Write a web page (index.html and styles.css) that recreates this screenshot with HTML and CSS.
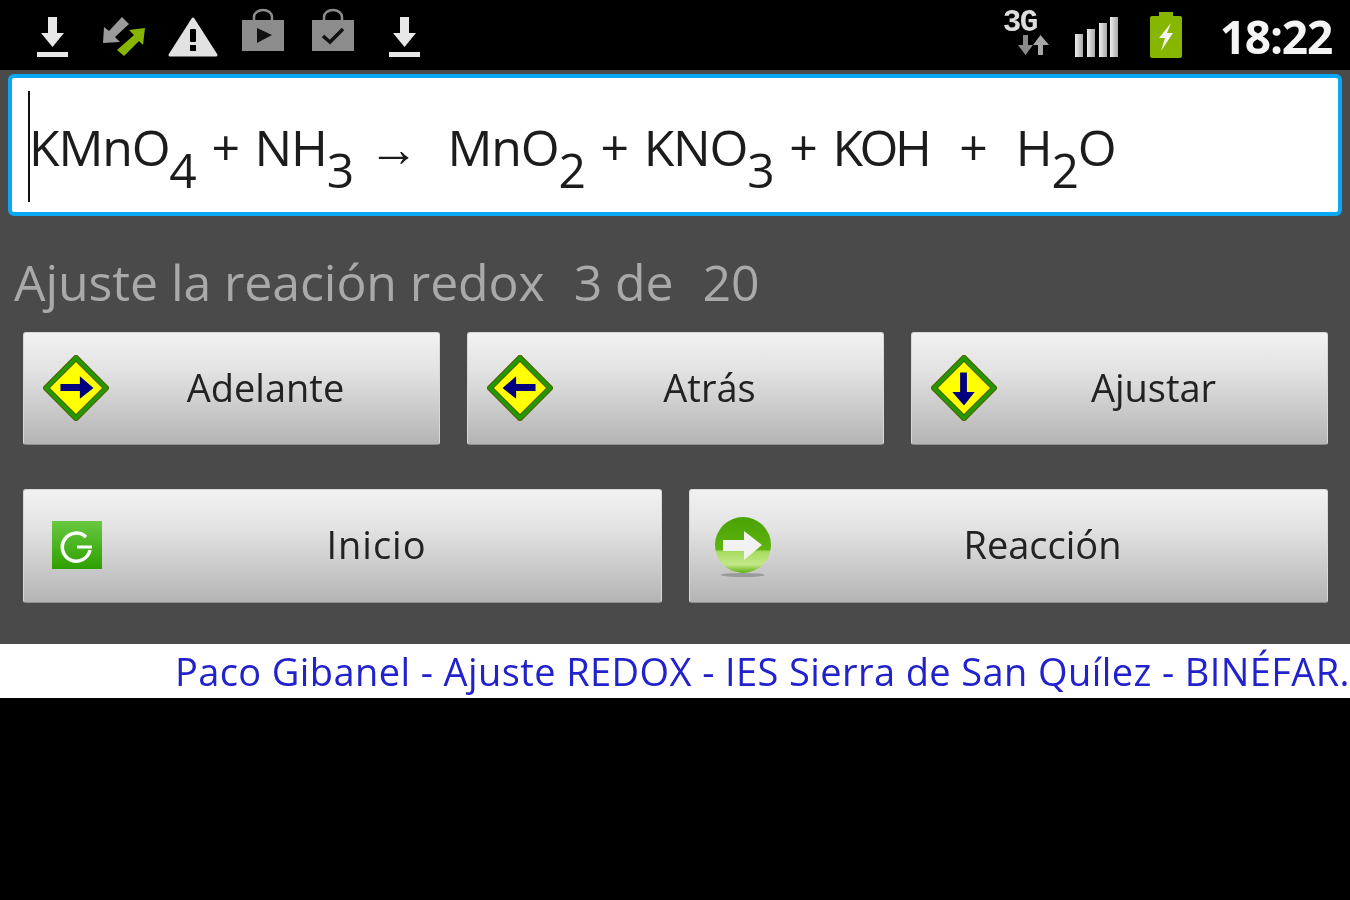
FILE: index.html
```html
<!DOCTYPE html>
<html lang="es">
<head>
<meta charset="utf-8">
<title>Ajuste REDOX</title>
<link rel="stylesheet" href="styles.css">
</head>
<body>
<div class="screen">
  <header class="status">
    <div class="status-left">
      <svg class="ic" width="40" height="44" viewBox="0 0 40 44"><path class="w" d="M16 3h9v16h7L20.500 33 9 19h7z"/><rect class="w" x="5" y="38" width="31" height="5"/></svg>
      <svg class="ic" width="46" height="44" viewBox="0 0 46 44"><path fill="#9a9a9a" d="M3 29l1-16 5 4L22 3l7 7-14 13 5 5z"/><path fill="#86b600" d="M45 14l-16 2 5 5-17 15 7 6 15-15 4 4z"/></svg>
      <svg class="ic" width="50" height="44" viewBox="0 0 50 44"><path fill="#e2e2e2" stroke="#e2e2e2" stroke-width="3" stroke-linejoin="round" d="M25 6l23 36H2z"/><rect fill="#000" x="22" y="16" width="6" height="13" rx="1"/><rect fill="#000" x="22" y="32" width="6" height="6"/></svg>
      <svg class="ic" width="44" height="44" viewBox="0 0 44 44"><path fill="none" stroke="#8c8c8c" stroke-width="2.500" d="M13 13V9a9 7 0 0 1 18 0v4"/><rect fill="#8c8c8c" x="1" y="12" width="42" height="31"/><path fill="#111" d="M16 20l15 7-15 8z"/></svg>
      <svg class="ic" width="44" height="44" viewBox="0 0 44 44"><path fill="none" stroke="#8c8c8c" stroke-width="2.500" d="M13 13V9a9 7 0 0 1 18 0v4"/><rect fill="#8c8c8c" x="1" y="12" width="42" height="31"/><path fill="none" stroke="#111" stroke-width="3.500" d="M12 28l7 6 13-13"/></svg>
      <svg class="ic" width="40" height="44" viewBox="0 0 40 44"><path class="w" d="M16 3h9v16h7L20.500 33 9 19h7z"/><rect class="w" x="5" y="38" width="31" height="5"/></svg>
    </div>
    <div class="status-right">
      <div class="net">
        <span class="net-label">3G</span>
        <svg width="34" height="20" viewBox="0 0 34 20"><path fill="#8a8a8a" d="M8 0h5v10h5l-7.500 10L3 10h5z"/><path fill="#a8a8a8" d="M23 20h5V10h6L25.500 0 18 10h5z"/></svg>
      </div>
      <svg class="signal" width="43" height="40" viewBox="0 0 43 40"><defs><linearGradient id="sg" x1="0" y1="0" x2="1" y2="0"><stop offset="0" stop-color="#f0f0f0"/><stop offset="1" stop-color="#a8a8a8"/></linearGradient></defs><rect fill="url(#sg)" x="0" y="17" width="8" height="23"/><rect fill="url(#sg)" x="12" y="12" width="8" height="28"/><rect fill="url(#sg)" x="24" y="6" width="8" height="34"/><rect fill="url(#sg)" x="35" y="0" width="8" height="40"/></svg>
      <svg class="battery" width="34" height="46" viewBox="0 0 34 46"><rect fill="#86b600" x="10" y="0" width="14" height="5"/><rect fill="#86b600" x="1" y="4" width="32" height="42" rx="2"/><path fill="#f4f4f4" d="M22 11L10 26h6l-4 13 12-18h-6z"/></svg>
      <span class="clock">18:22</span>
    </div>
  </header>

  <main class="app">
    <div class="field">
      <span class="caret"></span>
      <p class="formula">KMnO<sub>4</sub> + NH<sub>3</sub> <span class="arrow">→</span><span class="gap-a"></span>MnO<sub>2</sub> + KNO<sub>3</sub> + <span class="koh">KOH</span><span class="gap-b"></span>+<span class="gap-c"></span>H<sub>2</sub>O</p>
    </div>
    <p class="prompt">Ajuste la reación redox<span class="sp"></span>3 de<span class="sp"></span>20</p>
    <div class="row row-three">
      <button class="btn">
        <svg class="btn-ic diamond" width="66" height="66" viewBox="0 0 68 68"><path fill="#ffff00" stroke="#5a5a00" stroke-width="6" stroke-linejoin="round" d="M34 3l31 31-31 31L3 34z"/><path fill="none" stroke="#1f9a00" stroke-width="4" stroke-linejoin="round" d="M34 3l31 31-31 31L3 34z"/><path fill="#000080" d="M18 30h20v-8l14 12-14 11v-8H18z"/></svg>
        <span class="label">Adelante</span>
      </button>
      <button class="btn">
        <svg class="btn-ic diamond" width="66" height="66" viewBox="0 0 68 68"><path fill="#ffff00" stroke="#5a5a00" stroke-width="6" stroke-linejoin="round" d="M34 3l31 31-31 31L3 34z"/><path fill="none" stroke="#1f9a00" stroke-width="4" stroke-linejoin="round" d="M34 3l31 31-31 31L3 34z"/><path fill="#000080" d="M50 30H30v-8L16 34l14 11v-8h20z"/></svg>
        <span class="label">Atrás</span>
      </button>
      <button class="btn">
        <svg class="btn-ic diamond" width="66" height="66" viewBox="0 0 68 68"><path fill="#ffff00" stroke="#5a5a00" stroke-width="6" stroke-linejoin="round" d="M34 3l31 31-31 31L3 34z"/><path fill="none" stroke="#1f9a00" stroke-width="4" stroke-linejoin="round" d="M34 3l31 31-31 31L3 34z"/><path fill="#000080" d="M30 18v20h-8l12 14 11-14h-8V18z"/></svg>
        <span class="label">Ajustar</span>
      </button>
    </div>
    <div class="row row-two">
      <button class="btn">
        <svg class="btn-ic refresh" width="50" height="48" viewBox="0 0 50 48"><defs><linearGradient id="gr" x1="0" y1="0" x2="0" y2="1"><stop offset="0" stop-color="#68c840"/><stop offset="1" stop-color="#2ea000"/></linearGradient></defs><rect fill="url(#gr)" width="50" height="48"/><path fill="none" stroke="#fff" stroke-width="3.500" d="M34 16a14 14 0 1 0 4 13"/><path fill="none" stroke="#fff" stroke-width="3" d="M25 26h15"/></svg>
        <span class="label label-wide">Inicio</span>
      </button>
      <button class="btn">
        <svg class="btn-ic go" width="60" height="62" viewBox="0 0 60 62"><defs><linearGradient id="go" x1="0" y1="0" x2="0" y2="1"><stop offset="0" stop-color="#49a204"/><stop offset=".58" stop-color="#5eb40e"/><stop offset=".62" stop-color="#a8dc60"/><stop offset=".85" stop-color="#c2e888"/><stop offset="1" stop-color="#5cb00c"/></linearGradient></defs><ellipse fill="#9a9a9a" cx="28" cy="58" rx="22" ry="2"/><circle fill="url(#go)" cx="28" cy="28" r="28"/><path fill="#f2f2f2" d="M8 23h21V14l18 14-18 15v-9H8z"/></svg>
        <span class="label">Reacción</span>
      </button>
    </div>
  </main>

  <footer class="credit">Paco Gibanel - Ajuste REDOX - IES Sierra de San Quílez - BINÉFAR.</footer>
  <div class="rest"></div>
</div>
</body>
</html>
```
FILE: styles.css
```css
* { box-sizing: border-box; }
html, body { margin: 0; height: 100%; background: #000; }
body { overflow: hidden; font-family: "Open Sans", "Noto Sans", sans-serif; }
.screen { height: 900px; display: flex; flex-direction: column; filter: blur(0.7px); }

.status { height: 70px; flex: none; background: #000; display: flex; justify-content: space-between; align-items: flex-start; padding: 14px 17px 0 32px; }
.status-left { display: flex; align-items: flex-start; }
.status-left .ic { display: block; margin-right: 28px; }
.status-left .ic:nth-child(2) { margin-left: 0; margin-right: 22px; }
.status-left .ic:nth-child(3) { margin-right: 23px; margin-top: -1px; }
.status-left .ic:nth-child(4) { margin-top: -6px; margin-right: 26px; }
.status-left .ic:nth-child(5) { margin-top: -6px; margin-right: 29px; }
.w { fill: #e8e8e8; }
.status-right { display: flex; align-items: flex-start; }
.net { width: 46px; margin-right: 26px; margin-top: -3px; display: flex; flex-direction: column; align-items: flex-end; }
.net-label { align-self: flex-start; height: 24px; font: 700 31px/24px "Liberation Mono", monospace; color: #ddd; letter-spacing: -1.5px; }
.signal { margin-top: 3px; margin-right: 31px; }
.battery { margin-top: -2px; margin-right: 37px; }
.clock { font-size: 46px; line-height: 48px; font-weight: 700; color: #f4f4f4; letter-spacing: -1.2px; margin: -2px 1px 0 0; }

.app { height: 574px; flex: none; background: #4a4a4a; padding: 4px 8px 0; display: flex; flex-direction: column; }
.field { position: relative; height: 142px; background: #fff; border: 4px solid #0aa8f2; border-radius: 6px; padding: 0 0 0 17px; }
.caret { position: absolute; left: 16px; top: 13px; width: 2px; height: 111px; background: #111; }
.formula { margin: 0; padding-top: 35px; font-size: 50px; line-height: 68px; color: #1c1c1c; white-space: nowrap; letter-spacing: -1.2px; word-spacing: 4px; }
.formula sub { font-size: 48px; line-height: 0; vertical-align: -22px; }
.arrow { font-size: 50px; }
.koh { letter-spacing: -3.5px; }
.gap-a { display: inline-block; width: 30px; }
.gap-b { display: inline-block; width: 31px; }
.gap-c { display: inline-block; width: 29px; }
.prompt { margin: 32px 0 2px 6px; font-size: 50px; line-height: 68px; color: #a9a9a9; white-space: nowrap; letter-spacing: -.1px; }
.sp { display: inline-block; width: 29px; }

.row { display: grid; margin: 14px 14px 0 15px; gap: 27px; }
.row-three { grid-template-columns: repeat(3, 1fr); height: 113px; }
.row-two { grid-template-columns: repeat(2, 1fr); height: 114px; margin-top: 44px; }
.btn { position: relative; display: flex; align-items: center; justify-content: center; padding: 0 0 4px; border: 1px solid #d8d8d8; border-bottom-color: #909090; border-radius: 3px; background: linear-gradient(#f2f2f2, #e2e2e2 35%, #b4b4b4); font: 38px "Open Sans", "Noto Sans", sans-serif; color: #222; }
.label { display: block; }
.label-wide { letter-spacing: 1px; }
.btn-ic { position: absolute; }
.diamond { left: 19px; top: 22px; }
.refresh { left: 28px; top: 31px; }
.go { left: 25px; top: 27px; }
.row-three .label { padding-left: 68px; }
.row-two .label { padding-left: 68px; }

.credit { height: 54px; flex: none; background: #fff; color: #2222cc; font-size: 38px; line-height: 54px; text-align: right; white-space: nowrap; overflow: hidden; letter-spacing: .4px; }
.rest { flex: 1; background: #000; }
```
